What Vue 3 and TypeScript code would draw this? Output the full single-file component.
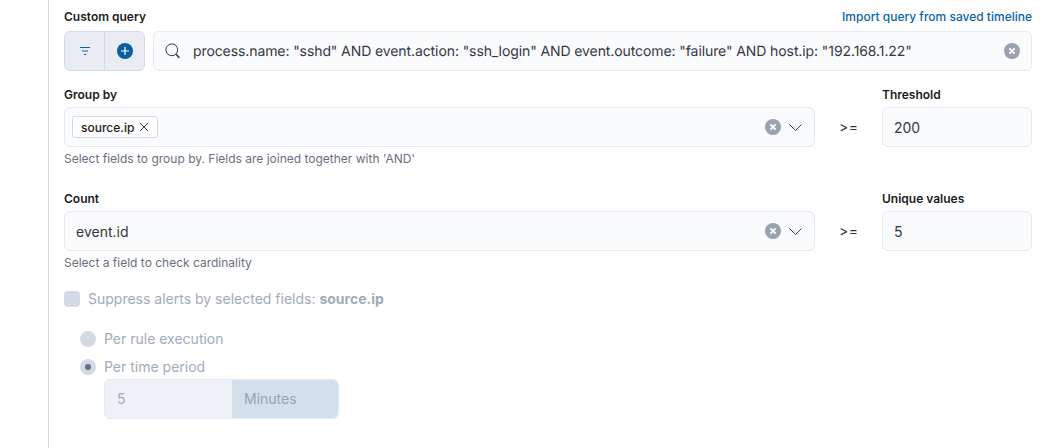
<script setup lang="ts">
const query = 'process.name: "sshd" AND event.action: "ssh_login" AND event.outcome: "failure" AND host.ip: "192.168.1.22"'
</script>

<template>
  <div class="page">
    <div class="panel">
      <div class="label-row first">
        <span class="label">Custom query</span>
        <a class="link">Import query from saved timeline</a>
      </div>
      <div class="query-row">
        <div class="filter-group">
          <div class="filter-btn">
            <svg width="10" height="8" viewBox="0 0 10 8"><path d="M0 0.5h10M2 4h6M3.8 7.5h2.4" stroke="#0b64a8" stroke-width="1" fill="none" /></svg>
          </div>
          <div class="add-btn">
            <svg width="16" height="16" viewBox="0 0 16 16"><circle cx="8" cy="8" r="8" fill="#07609f" /><path d="M8 4v8M4 8h8" stroke="#fff" stroke-width="1.2" /></svg>
          </div>
        </div>
        <div class="field search">
          <svg class="search-icon" width="16" height="16" viewBox="0 0 16 16"><circle cx="6.8" cy="6.8" r="5.9" stroke="#343741" fill="none" /><path d="M11 11.2l3.4 3.6" stroke="#343741" stroke-width="1.6" fill="none" /></svg>
          <span class="value grow query">{{ query }}</span>
          <svg class="clear" width="16" height="16" viewBox="0 0 16 16"><circle cx="8" cy="8" r="8" fill="#98a2b3" /><path d="M5.4 5.4l5.2 5.2M10.6 5.4l-5.2 5.2" stroke="#fff" stroke-width="1.9" /></svg>
        </div>
      </div>

      <div class="form-row group-row">
        <div class="main-col">
          <div class="label">Group by</div>
          <div class="field combo">
            <span class="chip">source.ip
              <svg width="10" height="10" viewBox="0 0 10 10"><path d="M1 1l8 8M9 1l-8 8" stroke="#343741" stroke-width="1" /></svg>
            </span>
            <span class="grow"></span>
            <svg class="clear" width="16" height="16" viewBox="0 0 16 16"><circle cx="8" cy="8" r="8" fill="#98a2b3" /><path d="M5.4 5.4l5.2 5.2M10.6 5.4l-5.2 5.2" stroke="#fff" stroke-width="1.9" /></svg>
            <svg class="chev" width="13" height="7" viewBox="0 0 13 7"><path d="M0.5 0.5L6.5 6.5l6-6" stroke="#343741" fill="none" /></svg>
          </div>
          <div class="help">Select fields to group by. Fields are joined together with 'AND'</div>
        </div>
        <div class="gte">&gt;=</div>
        <div class="side-col">
          <div class="label">Threshold</div>
          <div class="field num">200</div>
        </div>
      </div>

      <div class="form-row count-row">
        <div class="main-col">
          <div class="label">Count</div>
          <div class="field combo plain">
            <span class="value grow">event.id</span>
            <svg class="clear" width="16" height="16" viewBox="0 0 16 16"><circle cx="8" cy="8" r="8" fill="#98a2b3" /><path d="M5.4 5.4l5.2 5.2M10.6 5.4l-5.2 5.2" stroke="#fff" stroke-width="1.9" /></svg>
            <svg class="chev" width="13" height="7" viewBox="0 0 13 7"><path d="M0.5 0.5L6.5 6.5l6-6" stroke="#343741" fill="none" /></svg>
          </div>
          <div class="help">Select a field to check cardinality</div>
        </div>
        <div class="gte">&gt;=</div>
        <div class="side-col">
          <div class="label">Unique values</div>
          <div class="field num">5</div>
        </div>
      </div>

      <div class="check-row">
        <span class="checkbox"></span>
        <span class="disabled-text">Suppress alerts by selected fields: <b>source.ip</b></span>
      </div>

      <div class="radios">
        <div class="radio-row">
          <span class="radio"></span>
          <span class="disabled-text">Per rule execution</span>
        </div>
        <div class="radio-row second">
          <span class="radio checked"></span>
          <span class="disabled-text">Per time period</span>
        </div>
        <div class="period">
          <span class="period-value">5</span>
          <span class="period-unit">Minutes</span>
        </div>
      </div>
    </div>
  </div>
</template>

<style>
html, body { margin: 0; background: #fff; }
</style>

<style scoped>
.page {
  width: 1044px;
  height: 448px;
  overflow: hidden;
  box-sizing: border-box;
  padding-left: 48px;
  font-family: Inter, "Liberation Sans", sans-serif;
  color: #343741;
  background: #fff;
}
.panel {
  height: 100%;
  box-sizing: border-box;
  border-left: 1px solid #d3dae6;
  padding: 10px 12px 0 15px;
}
.label-row { display: flex; justify-content: space-between; align-items: center; height: 14px; }
.label { font-size: 12px; font-weight: 600; line-height: 14px; color: #1a1c21; }
.link { font-size: 12px; font-weight: 500; line-height: 14px; color: #0b64a8; }
.query-row { display: flex; gap: 8px; margin-top: 7px; }
.filter-group {
  display: flex;
  width: 81px;
  height: 40px;
  box-sizing: border-box;
  border: 1px solid #d3dae6;
  border-radius: 6px;
  background: #e9edf3;
}
.filter-btn, .add-btn { display: flex; align-items: center; justify-content: center; }
.filter-btn { width: 39px; border-right: 1px solid #d3dae6; }
.add-btn { flex: 1; }
.field {
  display: flex;
  align-items: center;
  box-sizing: border-box;
  height: 40px;
  border: 1px solid #e6e9f0;
  border-radius: 6px;
  background: #fafbfd;
  font-size: 14px;
  color: #343741;
}
.search { flex: 1; padding: 0 11px 0 11px; }
.search-icon { margin-right: 12px; }
.query { text-rendering: geometricPrecision; letter-spacing: -0.095px; }
.grow { flex: 1; }
.value { white-space: nowrap; }
.form-row { display: flex; }
.group-row { margin-top: 17px; }
.count-row { margin-top: 26px; }
.main-col { width: 751px; }
.main-col .field { margin-top: 5px; }
.combo { padding: 0 11px 0 7px; }
.combo.plain { padding-left: 11px; }
.chip {
  display: inline-flex;
  align-items: center;
  gap: 5px;
  box-sizing: border-box;
  height: 22px;
  padding: 0 8px;
  border: 1px solid #d3dae6;
  border-radius: 3px;
  background: #fff;
  font-size: 12px;
  font-weight: 500;
  color: #1a1c21;
}
.chev { margin-left: 8px; margin-right: 1px; }
.help { margin-top: 4px; font-size: 12px; line-height: 15px; color: #69707d; }
.gte { width: 67px; box-sizing: border-box; padding: 31px 0 0 24px; font-size: 14px; line-height: 16px; letter-spacing: 0.5px; }
.side-col { width: 150px; }
.side-col .field { margin-top: 5px; }
.num { padding-left: 11px; }
.check-row { display: flex; align-items: center; gap: 8px; margin-top: 21px; height: 16px; }
.checkbox { width: 16px; height: 16px; border-radius: 4px; background: #d3dae6; }
.disabled-text { font-size: 14px; line-height: 16px; color: #a2abba; }
.disabled-text b { font-weight: 700; }
.radios { margin: 24px 0 0 16px; }
.radio-row { display: flex; align-items: center; gap: 8px; height: 16px; }
.radio-row.second { margin-top: 12px; }
.radio { position: relative; width: 16px; height: 16px; border-radius: 50%; background: #d3dae6; }
.radio.checked::after {
  content: "";
  position: absolute;
  left: 5px;
  top: 5px;
  width: 6px;
  height: 6px;
  border-radius: 50%;
  background: #69707d;
}
.period {
  display: flex;
  width: 235px;
  height: 40px;
  box-sizing: border-box;
  margin: 4px 0 0 24px;
  border: 1px solid #e6e9f0;
  border-radius: 6px;
  background: #eef2f8;
  overflow: hidden;
  font-size: 14px;
  color: #a2abba;
}
.period-value { width: 127px; box-sizing: border-box; padding-left: 12px; line-height: 38px; }
.period-unit { flex: 1; padding-left: 12px; line-height: 38px; background: #d2e0ee; color: #98a2b3; }
</style>
